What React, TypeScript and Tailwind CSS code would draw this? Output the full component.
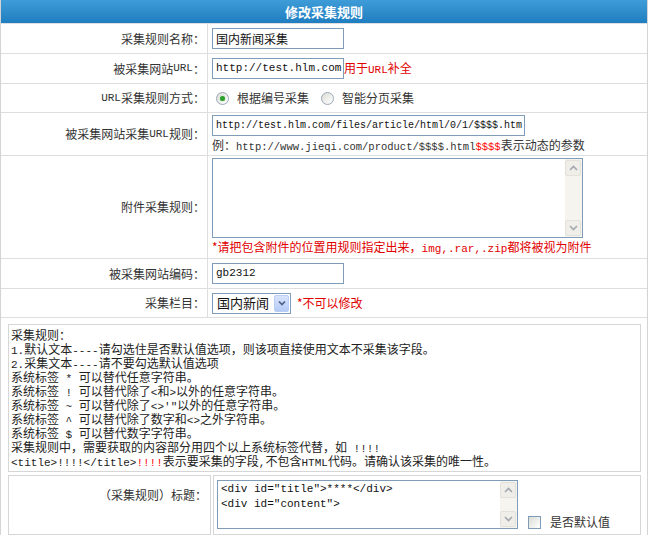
import type { ReactNode } from "react";

const cjk = "font-['Noto_Sans_CJK_SC',sans-serif]";
const mono = "font-['Liberation_Mono','Noto_Sans_CJK_SC',monospace]";

// half-width runs get the narrow mono face, the rest stays CJK
function Mixed({ text }: { text: string }) {
  const parts = text.split(/([\x20-\x7e]+)/).filter(Boolean);
  return (
    <>
      {parts.map((p, i) =>
        /^[\x20-\x7e]+$/.test(p) ? (
          <span key={i} className={`text-[11px] ${mono}`}>
            {p}
          </span>
        ) : (
          <span key={i}>{p}</span>
        )
      )}
    </>
  );
}

function Row({ label, h, children }: { label: string; h: string; children: ReactNode }) {
  return (
    <div className={`flex border-b border-[#dedede] ${h}`}>
      <div className="flex w-[207px] shrink-0 items-center justify-end border-r border-[#dedede] pr-[2px] text-[12px] text-[#333]">
        <Mixed text={label} />
      </div>
      <div className="flex flex-1 items-center pl-[4px]">{children}</div>
    </div>
  );
}

function TextBox({ value, w, size = "text-[12px]" }: { value: string; w: string; size?: string }) {
  return (
    <div className={`flex h-[21px] items-center overflow-hidden whitespace-nowrap border border-[#7f9db9] bg-white pl-[3px] text-[#111] ${w} ${size}`}>
      {value}
    </div>
  );
}

function Radio({ checked }: { checked?: boolean }) {
  return (
    <span className="flex h-[13px] w-[13px] items-center justify-center rounded-full border border-[#9aa9b8] bg-gradient-to-br from-[#dcdcd6] to-white">
      {checked && <span className="h-[5px] w-[5px] rounded-full bg-[#2fa02f] shadow-[0_0_1px_#6fd06f]" />}
    </span>
  );
}

function Chevron({ up }: { up?: boolean }) {
  return (
    <svg width="9" height="6" viewBox="0 0 9 6">
      <path d={up ? "M1 5 L4.5 1.5 L8 5" : "M1 1 L4.5 4.5 L8 1"} fill="none" stroke="#a3a8b0" strokeWidth="1.6" />
    </svg>
  );
}

// XP style vertical scrollbar drawn inside the text areas
function ScrollBar() {
  return (
    <div className="flex w-[17px] flex-col justify-between bg-[#f5f4ef] py-[1px] pr-[1px]">
      <div className="flex h-[16px] items-center justify-center rounded-[2px] border border-[#e2e1da] bg-[#efeee8]">
        <Chevron up />
      </div>
      <div className="flex h-[16px] items-center justify-center rounded-[2px] border border-[#e2e1da] bg-[#efeee8]">
        <Chevron />
      </div>
    </div>
  );
}

const notes: ReactNode[] = [
  <Mixed text="采集规则：" />,
  <Mixed text="1.默认文本----请勾选住是否默认值选项，则该项直接使用文本不采集该字段。" />,
  <Mixed text="2.采集文本----请不要勾选默认值选项" />,
  <Mixed text="系统标签 * 可以替代任意字符串。" />,
  <Mixed text="系统标签 ! 可以替代除了<和>以外的任意字符串。" />,
  <Mixed text={"系统标签 ~ 可以替代除了<>'\"以外的任意字符串。"} />,
  <Mixed text="系统标签 ^ 可以替代除了数字和<>之外字符串。" />,
  <Mixed text="系统标签 $ 可以替代数字字符串。" />,
  <Mixed text="采集规则中，需要获取的内容部分用四个以上系统标签代替，如 !!!!" />,
  <>
    <Mixed text="<title>!!!!</title>" />
    <span className={`text-[11px] text-[#ff0000] ${mono}`}>!!!!</span>
    <Mixed text="表示要采集的字段,不包含HTML代码。请确认该采集的唯一性。" />
  </>,
];

export default function App() {
  return (
    <div className={`w-[648px] border-x border-[#d4d4d4] bg-white text-[12px] text-[#333] ${cjk}`}>
      <div className="flex h-[24px] items-center justify-center border-b border-[#dedede] bg-gradient-to-b from-[#3e9cd8] to-[#1f7ec0] text-[13px] font-bold text-white">
        修改采集规则
      </div>

      <Row label="采集规则名称：" h="h-[30px]">
        <TextBox value="国内新闻采集" w="w-[132px]" />
      </Row>

      <Row label="被采集网站URL：" h="h-[30px]">
        <TextBox value="http://test.hlm.com" w="w-[132px]" size={`text-[11px] ${mono}`} />
        <span className="text-[#e00000]">
          <Mixed text="用于URL补全" />
        </span>
      </Row>

      <Row label="URL采集规则方式：" h="h-[29px]">
        <div className="flex items-center pl-[4px]">
          <Radio checked />
          <span className="ml-[8px]">根据编号采集</span>
          <span className="ml-[12px]">
            <Radio />
          </span>
          <span className="ml-[8px]">智能分页采集</span>
        </div>
      </Row>

      <Row label="被采集网站采集URL规则：" h="h-[43px]">
        <div className="flex flex-col">
          <TextBox value="http://test.hlm.com/files/article/html/0/1/$$$$.htm" w="w-[313px]" size={`text-[10px] ${mono}`} />
          <div className="mt-[2px] leading-[14px] text-[#333]">
            例：
            <span className={`text-[10.5px] ${mono}`}>
              http://www.jieqi.com/product/$$$$.html<span className="text-[#ff0000]">$$$$</span>
            </span>
            表示动态的参数
          </div>
        </div>
      </Row>

      <Row label="附件采集规则：" h="h-[103px]">
        <div className="flex flex-col">
          <div className="flex h-[80px] w-[371px] justify-end border border-[#7f9db9] bg-white">
            <ScrollBar />
          </div>
          <div className="mt-[2px] leading-[14px] text-[#e00000]">
            *请把包含附件的位置用规则指定出来，<span className={`text-[11px] ${mono}`}>img,.rar,.zip</span>都将被视为附件
          </div>
        </div>
      </Row>

      <Row label="被采集网站编码：" h="h-[30px]">
        <TextBox value="gb2312" w="w-[132px]" size={`text-[11px] ${mono}`} />
      </Row>

      <Row label="采集栏目：" h="h-[29px]">
        <div className="flex h-[21px] w-[79px] items-center justify-between border border-[#7f9db9] bg-white pl-[4px] pr-[1px] text-[13px] text-[#111]">
          国内新闻
          <span className="flex h-[17px] w-[15px] items-center justify-center rounded-[2px] border border-[#b9cdf5] bg-gradient-to-b from-[#d8e4fd] to-[#b5cbf6]">
            <svg width="8" height="6" viewBox="0 0 8 6">
              <path d="M1 1.5 L4 4.5 L7 1.5" fill="none" stroke="#4d6185" strokeWidth="1.7" />
            </svg>
          </span>
        </div>
        <span className="ml-[6px] text-[#e00000]">*不可以修改</span>
      </Row>

      <div className="pb-[2px] pl-[7px] pr-[6px] pt-[6px]">
        <div className="border border-[#d6d6d6] px-[2px] py-[3px] leading-[14px] text-[#222]">
          {notes.map((n, i) => (
            <div key={i} className="h-[14px] whitespace-pre">
              {n}
            </div>
          ))}
        </div>
      </div>

      <div className="flex gap-[2px] pl-[7px] pr-[6px] pt-[1px]">
        <div className="flex h-[60px] w-[203px] shrink-0 justify-end border border-[#d6d6d6] pr-[3px] pt-[12px] leading-[14px]">
          （采集规则）标题：
        </div>
        <div className="flex h-[60px] flex-1 items-start gap-[10px] border border-[#d6d6d6] pl-[3px] pt-[4px]">
          <div className="flex h-[49px] w-[301px] border border-[#7f9db9] bg-white">
            <div className={`flex-1 pl-[3px] pt-[1px] text-[11px] leading-[15px] text-[#111] ${mono}`}>
              <div>{'<div id="title">****</div>'}</div>
              <div>{'<div id="content">'}</div>
            </div>
            <ScrollBar />
          </div>
          <div className="mt-[33px] flex items-center gap-[9px]">
            <span className="h-[13px] w-[13px] border border-[#7f9db9] bg-gradient-to-br from-[#dcdcd6] to-white" />
            <span>是否默认值</span>
          </div>
        </div>
      </div>
    </div>
  );
}
